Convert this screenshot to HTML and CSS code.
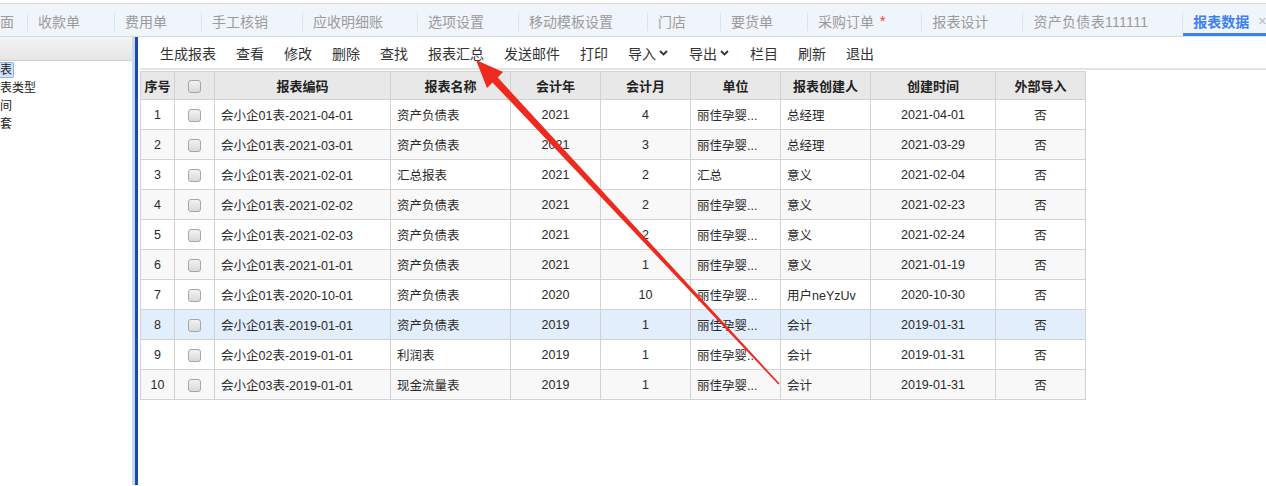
FILE: index.html
```html
<!DOCTYPE html>
<html lang="zh-CN">
<head>
    <meta charset="UTF-8">
    <title>报表数据</title>
    <link rel="stylesheet" href="styles.css">
</head>
<body>
    <div class="tabbar">
        <div class="tab tab-home">面</div>
        <span class="sep"></span>
        <div class="tab">收款单<span class="close"></span></div>
        <span class="sep"></span>
        <div class="tab">费用单<span class="close"></span></div>
        <span class="sep"></span>
        <div class="tab">手工核销<span class="close"></span></div>
        <span class="sep"></span>
        <div class="tab">应收明细账<span class="close"></span></div>
        <span class="sep"></span>
        <div class="tab">选项设置<span class="close"></span></div>
        <span class="sep"></span>
        <div class="tab">移动模板设置<span class="close"></span></div>
        <span class="sep"></span>
        <div class="tab">门店<span class="close"></span></div>
        <span class="sep"></span>
        <div class="tab">要货单<span class="close"></span></div>
        <span class="sep"></span>
        <div class="tab">采购订单<span class="star">*</span><span class="close"></span></div>
        <span class="sep"></span>
        <div class="tab">报表设计<span class="close"></span></div>
        <span class="sep"></span>
        <div class="tab tab-long">资产负债表111111<span class="close"></span></div>
        <span class="sep"></span>
        <div class="tab active">报表数据<span class="close">×</span></div>
    </div>

    <div class="main">
        <div class="side">
            <div class="side-head"></div>
            <ul class="tree">
                <li><span class="selected">表</span></li>
                <li>表类型</li>
                <li>间</li>
                <li>套</li>
            </ul>
        </div>
        <div class="splitter"></div>
        <div class="content">
            <div class="toolbar">
                <span class="btn">生成报表</span>
                <span class="btn">查看</span>
                <span class="btn">修改</span>
                <span class="btn">删除</span>
                <span class="btn">查找</span>
                <span class="btn">报表汇总</span>
                <span class="btn">发送邮件</span>
                <span class="btn">打印</span>
                <span class="btn">导入<svg class="caret" width="9" height="6" viewBox="0 0 9 6"><path d="M1 1 L4.5 4.5 L8 1" fill="none" stroke="#333" stroke-width="1.8"/></svg></span>
                <span class="btn">导出<svg class="caret" width="9" height="6" viewBox="0 0 9 6"><path d="M1 1 L4.5 4.5 L8 1" fill="none" stroke="#333" stroke-width="1.8"/></svg></span>
                <span class="btn">栏目</span>
                <span class="btn">刷新</span>
                <span class="btn">退出</span>
            </div>

            <table class="grid">
                <colgroup>
                    <col style="width:34px"><col style="width:40px"><col style="width:176px"><col style="width:120px">
                    <col style="width:90px"><col style="width:90px"><col style="width:90px"><col style="width:90px">
                    <col style="width:125px"><col style="width:90px">
                </colgroup>
                <thead>
                    <tr>
                        <th>序号</th><th><span class="check"></span></th><th>报表编码</th><th>报表名称</th>
                        <th>会计年</th><th>会计月</th><th>单位</th><th>报表创建人</th><th>创建时间</th><th>外部导入</th>
                    </tr>
                </thead>
                <tbody>
                    <tr>
                        <td class="c">1</td><td class="c"><span class="check"></span></td><td>会小企01表-2021-04-01</td><td>资产负债表</td>
                        <td class="c">2021</td><td class="c">4</td><td>丽佳孕婴...</td><td>总经理</td><td class="c">2021-04-01</td><td class="c">否</td>
                    </tr>
                    <tr>
                        <td class="c">2</td><td class="c"><span class="check"></span></td><td>会小企01表-2021-03-01</td><td>资产负债表</td>
                        <td class="c">2021</td><td class="c">3</td><td>丽佳孕婴...</td><td>总经理</td><td class="c">2021-03-29</td><td class="c">否</td>
                    </tr>
                    <tr>
                        <td class="c">3</td><td class="c"><span class="check"></span></td><td>会小企01表-2021-02-01</td><td>汇总报表</td>
                        <td class="c">2021</td><td class="c">2</td><td>汇总</td><td>意义</td><td class="c">2021-02-04</td><td class="c">否</td>
                    </tr>
                    <tr>
                        <td class="c">4</td><td class="c"><span class="check"></span></td><td>会小企01表-2021-02-02</td><td>资产负债表</td>
                        <td class="c">2021</td><td class="c">2</td><td>丽佳孕婴...</td><td>意义</td><td class="c">2021-02-23</td><td class="c">否</td>
                    </tr>
                    <tr>
                        <td class="c">5</td><td class="c"><span class="check"></span></td><td>会小企01表-2021-02-03</td><td>资产负债表</td>
                        <td class="c">2021</td><td class="c">2</td><td>丽佳孕婴...</td><td>意义</td><td class="c">2021-02-24</td><td class="c">否</td>
                    </tr>
                    <tr>
                        <td class="c">6</td><td class="c"><span class="check"></span></td><td>会小企01表-2021-01-01</td><td>资产负债表</td>
                        <td class="c">2021</td><td class="c">1</td><td>丽佳孕婴...</td><td>意义</td><td class="c">2021-01-19</td><td class="c">否</td>
                    </tr>
                    <tr>
                        <td class="c">7</td><td class="c"><span class="check"></span></td><td>会小企01表-2020-10-01</td><td>资产负债表</td>
                        <td class="c">2020</td><td class="c">10</td><td>丽佳孕婴...</td><td>用户neYzUv</td><td class="c">2020-10-30</td><td class="c">否</td>
                    </tr>
                    <tr class="current">
                        <td class="c">8</td><td class="c"><span class="check"></span></td><td>会小企01表-2019-01-01</td><td>资产负债表</td>
                        <td class="c">2019</td><td class="c">1</td><td>丽佳孕婴...</td><td>会计</td><td class="c">2019-01-31</td><td class="c">否</td>
                    </tr>
                    <tr>
                        <td class="c">9</td><td class="c"><span class="check"></span></td><td>会小企02表-2019-01-01</td><td>利润表</td>
                        <td class="c">2019</td><td class="c">1</td><td>丽佳孕婴...</td><td>会计</td><td class="c">2019-01-31</td><td class="c">否</td>
                    </tr>
                    <tr>
                        <td class="c">10</td><td class="c"><span class="check"></span></td><td>会小企03表-2019-01-01</td><td>现金流量表</td>
                        <td class="c">2019</td><td class="c">1</td><td>丽佳孕婴...</td><td>会计</td><td class="c">2019-01-31</td><td class="c">否</td>
                    </tr>
                </tbody>
            </table>
        </div>
    </div>

    <!-- annotation arrow drawn over the page -->
    <svg class="arrow" width="1266" height="486" viewBox="0 0 1266 486">
        <polygon points="476,60 503,72 497.7,77.5 779.6,383.5 778.4,384.5 492.5,82.5 487,88" fill="#ee2a1e"/>
    </svg>
</body>
</html>
```

FILE: styles.css
```css
* {
    margin: 0;
    padding: 0;
    box-sizing: border-box;
}

body {
    position: relative;
    width: 1266px;
    height: 486px;
    overflow: hidden;
    background: #fff;
    font-family: "Liberation Sans", "Noto Sans CJK SC", sans-serif;
    color: #333;
}

/* tab strip */
.tabbar {
    display: flex;
    height: 34px;
    margin-top: 3px;
    border-top: 1px solid #dcdcdc;
    border-bottom: 1px solid #dcdcdc;
    background: #f0f4fb;
    font-size: 14px;
    white-space: nowrap;
}

.tab {
    display: flex;
    align-items: center;
    padding: 5px 0 0 10px;
    border-bottom: 3px solid transparent;
    color: #9b9b9b;
    flex-shrink: 0;
}

.tab-home {
    padding-left: 0;
    padding-right: 13px;
}

.tab-long {
    letter-spacing: 0.3px;
}

.tab .close {
    display: inline-block;
    width: 12px;
    margin: 0 12px 0 10px;
    color: #bbb;
    font-size: 14px;
}

.tab .star {
    color: #f23b3b;
    margin: 0 2px 0 6px;
}

.tab.active {
    color: #3f7ff2;
    font-weight: bold;
    border-bottom-color: #3d82f4;
}

.tab.active .close {
    margin-left: 9px;
    font-weight: normal;
}

.sep {
    flex-shrink: 0;
    align-self: center;
    width: 1px;
    height: 18px;
    margin-top: 3px;
    background: #dde1e8;
}

/* body area */
.main {
    display: flex;
    height: 448px;
}

.side {
    width: 132px;
    flex-shrink: 0;
    overflow: hidden;
}

.side-head {
    height: 24px;
    background: linear-gradient(#f4f4f4, #e6e6e6);
    border-bottom: 1px solid #d0d0d0;
}

.tree {
    list-style: none;
    font-size: 12px;
    line-height: 18px;
    color: #222;
    white-space: nowrap;
}

.tree .selected {
    padding: 0 1px 0 0;
    background: #cfe2fb;
    border: 1px solid #8db4e8;
    border-left: none;
    border-radius: 0 2px 2px 0;
}

.splitter {
    width: 6px;
    flex-shrink: 0;
    border-right: 3px solid #1b48b3;
    background: #c3d9f6;
}

.content {
    flex: 1;
    padding-left: 2px;
}

.toolbar {
    display: flex;
    align-items: center;
    height: 33px;
    padding-left: 20px;
    border-bottom: 2px solid #e4e4e4;
    font-size: 14px;
    color: #333;
}

.btn {
    display: flex;
    align-items: center;
    margin-right: 20px;
}

.caret {
    margin-left: 3px;
    margin-right: 1px;
}

/* data grid */
.grid {
    margin-top: 1px;
    border-collapse: collapse;
    table-layout: fixed;
    width: 945px;
    font-size: 12.5px;
}

.grid th,
.grid td {
    border: 1px solid #d2d2d2;
    white-space: nowrap;
    overflow: hidden;
}

.grid th {
    height: 28px;
    background: #e8e8e8;
    color: #222;
    font-size: 13px;
    font-weight: bold;
    text-align: center;
}

.grid td {
    height: 30px;
    padding: 0 6px;
    color: #2a2a2a;
}

.grid td.c {
    text-align: center;
    padding: 0;
}

.grid tbody tr:nth-child(even) {
    background: #f8f8f8;
}

.grid tbody tr.current {
    background: #e2eefc;
}

.check {
    display: inline-block;
    width: 13px;
    height: 13px;
    vertical-align: middle;
    border: 1px solid #a6a6a6;
    border-radius: 3px;
    background: linear-gradient(#f2f2f2, #d9d9d9);
}

.arrow {
    position: absolute;
    left: 0;
    top: 0;
    pointer-events: none;
}
```
